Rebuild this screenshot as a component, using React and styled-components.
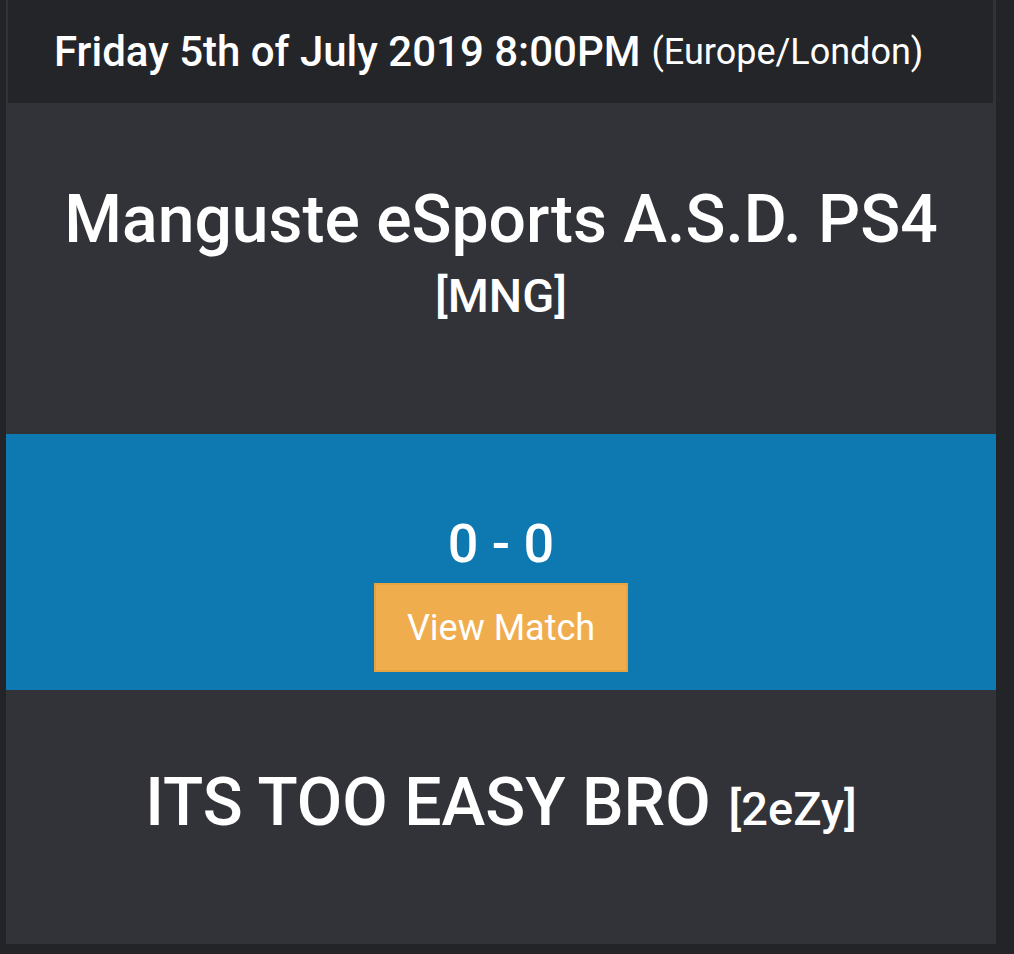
import React from "react";
import styled, { createGlobalStyle } from "styled-components";

const GlobalStyle = createGlobalStyle`
  html, body {
    margin: 0;
    padding: 0;
    background: #232428;
  }
  body {
    font-family: Roboto, "Noto Sans", "Liberation Sans", sans-serif;
    color: #ffffff;
  }
`;

const Card = styled.div`
  width: 990px;
  margin-left: 6px;
  height: 944px;
  background: #323338;
  display: flex;
  flex-direction: column;
`;

const DateBar = styled.div`
  height: 103px;
  margin: 0 3px 0 2px;
  background: #242529;
  display: flex;
  align-items: center;
  padding-left: 46px;
  box-sizing: border-box;
`;

const DateText = styled.span`
  font-size: 42px;
  font-weight: 500;
`;

const Zone = styled.span`
  font-size: 36px;
  font-weight: 400;
  margin-left: 11px;
`;

const TeamBlock = styled.div`
  height: ${(p) => p.h}px;
  padding-top: ${(p) => p.top}px;
  box-sizing: border-box;
  text-align: center;
`;

const TeamName = styled.div`
  font-size: 66px;
  font-weight: 500;
  line-height: 74px;
`;

const Tag = styled.span`
  display: ${(p) => (p.block ? "block" : "inline")};
  font-size: 47px;
  font-weight: 500;
  line-height: 60px;
  margin-left: ${(p) => (p.block ? 0 : 18)}px;
  margin-top: ${(p) => (p.block ? 9 : 0)}px;
`;

const ScoreBand = styled.div`
  height: 256px;
  background: #0e79b0;
  display: flex;
  flex-direction: column;
  align-items: center;
  padding-top: 77px;
  box-sizing: border-box;
`;

const Score = styled.div`
  font-size: 54px;
  font-weight: 500;
  line-height: 66px;
  margin-bottom: 6px;
`;

const ViewButton = styled.button`
  width: 254px;
  height: 89px;
  background: #f0ad4e;
  border: 2px solid #e6a440;
  color: #ffffff;
  font-family: Roboto, "Noto Sans", "Liberation Sans", sans-serif;
  font-size: 36px;
  font-weight: 400;
  padding: 0;
  cursor: pointer;
`;

export default function App() {
  return (
    <>
      <GlobalStyle />
      <Card>
        <DateBar>
          <DateText>Friday 5th of July 2019 8:00PM</DateText>
          <Zone>(Europe/London)</Zone>
        </DateBar>
        <TeamBlock h={331} top={80}>
          <TeamName>Manguste eSports A.S.D. PS4</TeamName>
          <Tag block>[MNG]</Tag>
        </TeamBlock>
        <ScoreBand>
          <Score>0 - 0</Score>
          <ViewButton>View Match</ViewButton>
        </ScoreBand>
        <TeamBlock h={254} top={76}>
          <TeamName>
            ITS TOO EASY BRO<Tag>[2eZy]</Tag>
          </TeamName>
        </TeamBlock>
      </Card>
    </>
  );
}
